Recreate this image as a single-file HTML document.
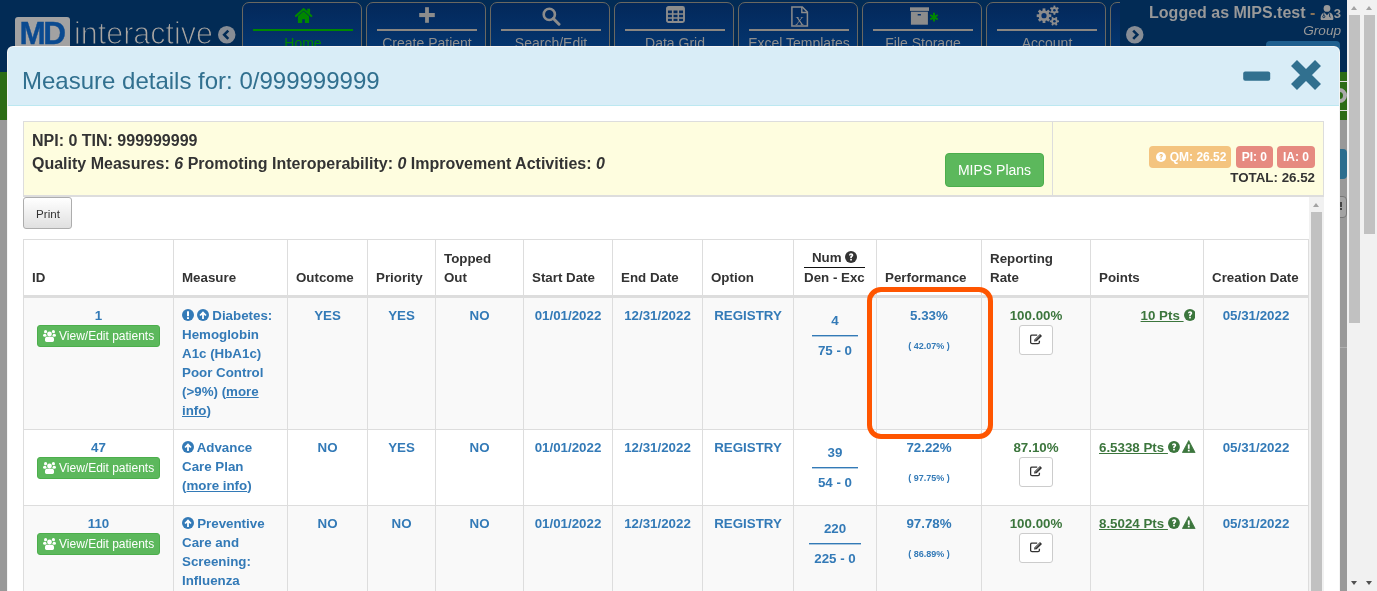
<!DOCTYPE html><html><head><meta charset="utf-8"><style>
*{box-sizing:border-box;margin:0;padding:0}
html,body{-webkit-font-smoothing:antialiased;width:1377px;height:591px;overflow:hidden;background:#999;font-family:"Liberation Sans",sans-serif;position:relative}
.abs{position:absolute}
svg{display:block}
#navy{left:0;top:0;width:1347px;height:72px;background:#022b55}
#green{left:0;top:72px;width:1347px;height:48px;background:#2c6c16}
#logo-box{left:15px;top:17px;width:55px;height:40px;background:#a2a2a2;border-radius:3px}
#logo-md{left:19.5px;top:18px;font-size:31.5px;line-height:30px;font-weight:bold;color:#0a4a90;letter-spacing:-2.4px;-webkit-text-stroke:0.4px #0a4a90}
#logo-int{left:74px;top:18px;font-size:30.5px;line-height:30px;color:#aaa6a2;-webkit-text-stroke:1.1px #022b55;paint-order:normal}
.tab{top:2px;width:120px;height:60px;border:1px solid #6a6861;border-radius:7px 7px 0 0;background:linear-gradient(#03285a 0%,#04346d 70%,#053c7b 100%)}
.tab .ln{position:absolute;left:10px;top:26px;width:100px;height:2px;background:#8a8681}
.tab .lb{position:absolute;left:1px;width:118px;top:32px;text-align:center;font-size:14px;line-height:16px;color:#8e8e8e}
.tab svg{position:absolute}
#logged{left:1120px;top:0;width:227px;height:72px;background:#022b55}
#lg1{right:6px;top:4px;font-size:16px;font-weight:bold;color:#999;line-height:18px;white-space:nowrap}
#lg2{right:6px;top:23px;font-size:13.6px;font-style:italic;color:#999;line-height:15px}
#bluebtn{left:1266px;top:41px;width:74px;height:20px;background:#1f5f8e;border-radius:4px}
#sb{left:1347px;top:0;width:30px;height:591px;background:#f1f1f1}
.thumb{position:absolute;background:#c1c1c1;width:11px}
.tri-up{position:absolute;width:0;height:0;border-left:3.5px solid transparent;border-right:3.5px solid transparent;border-bottom:4px solid #a3a3a3}
.tri-dn{position:absolute;width:0;height:0;border-left:3.6px solid transparent;border-right:3.6px solid transparent;border-top:4.2px solid #505050}
/* right strip stuff */
#rs-green{left:1339px;top:72px;width:8px;height:48px;background:#2c6c16}
/* modal */
#modal{left:7px;top:46px;width:1333px;height:560px;background:#fff;border:1px solid rgba(0,0,0,.04);border-radius:6px}
#modal-in{position:absolute;left:0;top:0;width:1331px;height:558px;overflow:hidden;border-radius:5px 5px 0 0}
#mh{position:absolute;left:0;top:0;width:1331px;height:59px;background:#d9edf7;border-bottom:1px solid #bce8f1}
#mt{position:absolute;left:14px;top:19px;font-size:24px;color:#31708f;line-height:30px;white-space:nowrap}
#mb{position:absolute;left:15px;top:74px;width:1301px}
#info{position:absolute;left:0;top:0;width:1301px;height:76px;background:#fefddf;border:1px solid #ddd;border-bottom:2px solid #ddd}
#info .l{position:absolute;left:8px;top:7px;font-size:16px;font-weight:bold;color:#333;line-height:23px;white-space:nowrap}
#info .div{position:absolute;left:1028px;top:0;width:1px;height:73px;background:#ddd}
#mips{position:absolute;left:921px;top:31px;width:99px;height:34px;background:#5cb85c;border:1px solid #4cae4c;border-radius:4px;color:#fff;font-size:14px;line-height:32px;text-align:center}
.lbl{display:inline-block;height:21.5px;line-height:23.5px;padding:0 6px;overflow:hidden;border-radius:4px;color:#fff;font-size:12px;font-weight:bold;vertical-align:top}
#lbls{position:absolute;right:8px;top:24px;text-align:right;font-size:0;white-space:nowrap}
#total{position:absolute;right:8px;top:48px;font-size:13.33px;font-weight:bold;color:#333;white-space:nowrap}
#print{position:absolute;left:0;top:76px;width:49px;height:32px;border:1px solid #adadad;border-radius:3px;background:linear-gradient(#fff,#e0e0e0);font-size:11.6px;color:#333;text-align:center;line-height:32px;padding-left:1px}
#tw{position:absolute;left:0;top:76px;width:1301px;height:420px;overflow:hidden}
#tsb{position:absolute;left:1286px;top:0;width:15px;height:420px;background:#f1f1f1}
#tsb .up{position:absolute;left:4px;top:6px;width:0;height:0;border-left:3.5px solid transparent;border-right:3.5px solid transparent;border-bottom:4px solid #a3a3a3}
#tsb .th{position:absolute;left:2px;top:15px;width:11px;height:400px;background:#c1c1c1}
table{position:absolute;left:0;top:42px;border-collapse:separate;border-spacing:0;table-layout:fixed;width:1286px;font-size:13.33px;line-height:19px;color:#333}
th,td{border-right:1px solid #ddd;border-bottom:1px solid #ddd;padding:8px;font-weight:bold;overflow:visible;white-space:nowrap}
th:first-child,td:first-child{border-left:1px solid #ddd}
thead th{border-top:1px solid #ddd;border-bottom:3px solid #ddd;vertical-align:bottom;text-align:left;height:59px}
td{vertical-align:top;text-align:center;color:#337ab7}
tr.odd td{background:#f9f9f9}
tr.r1 td{height:132px}
tr.r2 td{height:76px}
tr.r3 td{height:140px}
td.ms{text-align:left}
.nd{display:inline-block}
.nd .n{padding:5px 5.5px 5px;border-bottom:1px solid #337ab7;box-shadow:0 1px 0 rgba(51,122,183,0.4)}
.nd .d{padding:5px 5.5px 0}
.pc small{display:block;font-size:9px;margin-top:12px;line-height:19px}
.gr{color:#3c763d}
.eb{display:block;position:relative;margin:0 auto;width:34px;height:30px;background:#fff;border:1px solid #ccc;border-radius:3px}
.eb svg{position:absolute;left:10px;top:8px}
td.pt{text-align:right;color:#3c763d}
td.pt u{text-decoration:underline}
.vb{display:inline-block;position:relative;width:123px;height:22px;background:#5cb85c;border:1px solid #4cae4c;border-radius:3px;color:#fff;font-size:12px;font-weight:normal;line-height:21px;text-align:left;padding-left:21px;vertical-align:top}
.vb svg{position:absolute;left:5px;top:4px}
.hn{display:inline-block;margin-left:2px}
.hn .n{border-bottom:1px solid #111;text-align:center}
.ic{display:inline-block;vertical-align:-1px}
#orange{left:867px;top:287px;width:125.5px;height:152px;border:5.3px solid #ff5500;border-radius:14px}
</style></head><body><div style="position:absolute;left:0;top:0;width:1377px;height:591px;overflow:hidden;will-change:transform"><div id="navy" class="abs"></div><div id="green" class="abs"></div>
<div id="logo-box" class="abs"></div><div id="logo-md" class="abs">MD</div><div id="logo-int" class="abs">interactive</div>
<svg class="abs" style="left:218px;top:26px" width="17.5" height="17.5" viewBox="0 0 17.5 17.5"><circle cx="8.75" cy="8.75" r="8.75" fill="#878d95"/><path d="M10.3 4.6 L6.2 8.7 L10.3 12.8" fill="none" stroke="#022b55" stroke-width="2.6"/></svg>
<div class="abs tab" style="left:242px"><svg style="left:52px;top:5px" width="18" height="16" viewBox="0 0 18 16"><path d="M0.9 8 L8.6 1.2 L16.3 8" fill="none" stroke="#008800" stroke-width="2.2" stroke-linecap="round"/><rect x="12.2" y="0.7" width="2.9" height="4.5" fill="#008800"/><path d="M2.9 8.3 L8.6 3.3 L14.1 8.3 V15 H9.9 V11.2 H7.2 V15 H2.9 Z" fill="#008800"/></svg><div class="ln" style="background:#008800"></div><div class="lb" style="color:#008800">Home</div></div>
<div class="abs tab" style="left:366px"><svg style="left:52px;top:4px" width="16" height="16" viewBox="0 0 16 16"><rect x="6.1" y="0.2" width="3.8" height="15.6" fill="#8c8c8c"/><rect x="0.2" y="6" width="15.6" height="4.1" fill="#8c8c8c"/></svg><div class="ln"></div><div class="lb">Create Patient</div></div>
<div class="abs tab" style="left:490px"><svg style="left:51px;top:4px" width="19" height="19" viewBox="0 0 19 19"><circle cx="7.3" cy="7.4" r="5.6" fill="none" stroke="#8c8c8c" stroke-width="2.6"/><path d="M11.3 11.5 L17 17.2" stroke="#8c8c8c" stroke-width="3" stroke-linecap="round"/></svg><div class="ln"></div><div class="lb">Search/Edit</div></div>
<div class="abs tab" style="left:614px"><svg style="left:51px;top:3px" width="19" height="17" viewBox="0 0 19 17"><rect x="1" y="1" width="17" height="15" rx="1.5" fill="none" stroke="#8c8c8c" stroke-width="1.9"/><rect x="1" y="1" width="17" height="3.5" fill="#8c8c8c"/><path d="M1 8 H18 M1 12 H18 M6.7 4 V16 M12.3 4 V16" stroke="#8c8c8c" stroke-width="1.6"/></svg><div class="ln"></div><div class="lb">Data Grid</div></div>
<div class="abs tab" style="left:738px"><svg style="left:52px;top:3px" width="18" height="22" viewBox="0 0 18 22"><path d="M0.9 0.9 H11.3 L16.4 6 V19.9 H0.9 Z" fill="none" stroke="#8c8c8c" stroke-width="1.5"/><path d="M10.8 0.9 V6.5 H16.4" fill="none" stroke="#8c8c8c" stroke-width="1.4"/><text x="8.6" y="19" font-family="Liberation Serif" font-size="12.5" fill="#8c8c8c" text-anchor="middle">X</text></svg><div class="ln"></div><div class="lb">Excel Templates</div></div>
<div class="abs tab" style="left:862px"><svg style="left:47px;top:4px" width="30" height="20" viewBox="0 0 30 20"><rect x="0" y="0.3" width="19" height="3.6" fill="#8c8c8c"/><rect x="0.9" y="4.7" width="17" height="13" fill="#8c8c8c"/><rect x="7.6" y="7" width="3.4" height="1.6" rx="0.6" fill="#04306a"/><g stroke="#008800" stroke-width="2" stroke-linecap="butt"><path d="M24 5.8 V14.6"/><path d="M20.3 8 L27.7 12.4"/><path d="M20.3 12.4 L27.7 8"/></g></svg><div class="ln"></div><div class="lb">File Storage</div></div>
<div class="abs tab" style="left:986px"><svg style="left:49px;top:1px" width="24" height="22" viewBox="0 0 24 22"><g fill="#8c8c8c">
<circle cx="8" cy="11.7" r="5.4"/>
<rect x="6.6" y="4.4" width="2.8" height="3" transform="rotate(0 8 11.7)"/><rect x="6.6" y="4.4" width="2.8" height="3" transform="rotate(45 8 11.7)"/><rect x="6.6" y="4.4" width="2.8" height="3" transform="rotate(90 8 11.7)"/><rect x="6.6" y="4.4" width="2.8" height="3" transform="rotate(135 8 11.7)"/><rect x="6.6" y="4.4" width="2.8" height="3" transform="rotate(180 8 11.7)"/><rect x="6.6" y="4.4" width="2.8" height="3" transform="rotate(225 8 11.7)"/><rect x="6.6" y="4.4" width="2.8" height="3" transform="rotate(270 8 11.7)"/><rect x="6.6" y="4.4" width="2.8" height="3" transform="rotate(315 8 11.7)"/>
<circle cx="18.4" cy="6.2" r="3.2"/>
<rect x="17.5" y="1.6" width="1.8" height="2" transform="rotate(0 18.4 6.2)"/><rect x="17.5" y="1.6" width="1.8" height="2" transform="rotate(60 18.4 6.2)"/><rect x="17.5" y="1.6" width="1.8" height="2" transform="rotate(120 18.4 6.2)"/><rect x="17.5" y="1.6" width="1.8" height="2" transform="rotate(180 18.4 6.2)"/><rect x="17.5" y="1.6" width="1.8" height="2" transform="rotate(240 18.4 6.2)"/><rect x="17.5" y="1.6" width="1.8" height="2" transform="rotate(300 18.4 6.2)"/>
<circle cx="18.4" cy="17.3" r="3.2"/>
<rect x="17.5" y="12.7" width="1.8" height="2" transform="rotate(30 18.4 17.3)"/><rect x="17.5" y="12.7" width="1.8" height="2" transform="rotate(90 18.4 17.3)"/><rect x="17.5" y="12.7" width="1.8" height="2" transform="rotate(150 18.4 17.3)"/><rect x="17.5" y="12.7" width="1.8" height="2" transform="rotate(210 18.4 17.3)"/><rect x="17.5" y="12.7" width="1.8" height="2" transform="rotate(270 18.4 17.3)"/><rect x="17.5" y="12.7" width="1.8" height="2" transform="rotate(330 18.4 17.3)"/>
</g><circle cx="8" cy="11.7" r="2.6" fill="#04306a"/><circle cx="18.4" cy="6.2" r="1.3" fill="#04306a"/><circle cx="18.4" cy="17.3" r="1.3" fill="#04306a"/></svg><div class="ln"></div><div class="lb">Account</div></div>
<div class="abs tab" style="left:1110px"><div class="ln"></div></div>
<div id="logged" class="abs"></div>
<svg class="abs" style="left:1126px;top:26px" width="17.5" height="17.5" viewBox="0 0 17.5 17.5"><circle cx="8.75" cy="8.75" r="8.75" fill="#878d95"/><path d="M7.2 4.6 L11.3 8.7 L7.2 12.8" fill="none" stroke="#022b55" stroke-width="2.6"/></svg>
<div id="lg1" class="abs" style="right:36px">Logged as MIPS.test <span style="color:#8a7358">-</span> <svg class="ic" style="vertical-align:-1.5px" width="14" height="15" viewBox="0 0 14 15"><circle cx="7" cy="3.4" r="3.4" fill="#999"/><path d="M0.6 13.4 C0.6 9.8 2.4 7.9 4.5 7.6 L7 10.3 L9.5 7.6 C11.6 7.9 13.4 9.8 13.4 13.4 C13.4 14.4 12.8 15 12 15 H2 C1.2 15 0.6 14.4 0.6 13.4 Z" fill="#999"/><circle cx="3.8" cy="11.6" r="1.1" fill="none" stroke="#022b55" stroke-width="0.9"/><path d="M3.8 10.5 V8.2 M9.6 8.4 V11 Q9.6 12.3 10.6 12.3" fill="none" stroke="#022b55" stroke-width="0.9"/></svg><span style="font-size:13px">3</span></div>
<div id="lg2" class="abs" style="right:36px">Group</div>
<div id="bluebtn" class="abs"></div>
<div id="rs-green" class="abs"></div>
<div class="abs" style="left:1339px;top:81px;width:8px;height:1px;background:#dcdcdc"></div>
<div class="abs" style="left:1339px;top:110px;width:8px;height:1px;background:#dcdcdc"></div>
<div class="abs" style="left:1332px;top:88px;width:15px;height:15px;border-radius:50%;border:4.5px solid #aaa"></div>
<div class="abs" style="left:1320px;top:149px;width:27px;height:30px;border-radius:4px;background:#2b6d8e"></div>
<div class="abs" style="left:1320px;top:196px;width:27px;height:22px;border-radius:4px;background:#a3a3a3;border:1px solid #777"></div>
<div class="abs" style="left:1340px;top:202px;width:2px;height:5px;background:#444"></div><div class="abs" style="left:1340px;top:208px;width:2px;height:1.5px;background:#444"></div>
<div class="abs" style="left:1338px;top:347px;width:9px;height:1px;background:#b0b0b0"></div>
<div id="sb" class="abs"><div class="tri-up" style="left:4px;top:6px"></div><div class="tri-up" style="left:19px;top:6px"></div><div class="thumb" style="left:2px;top:15px;height:308px"></div><div class="thumb" style="left:17px;top:15px;height:219px"></div><div class="tri-dn" style="left:4px;top:581px"></div><div class="tri-dn" style="left:19px;top:581px"></div></div>
<div id="modal" class="abs"><div id="modal-in">
<div id="mh"><div id="mt">Measure details for: 0/999999999</div><svg class="abs" style="left:1235px;top:24px" width="28" height="10" viewBox="0 0 28 10"><rect x="0.2" y="0.5" width="27" height="9.2" rx="2" fill="#31708f"/></svg><svg class="abs" style="left:1282px;top:12px" width="32" height="32" viewBox="0 0 32 32"><path d="M4 4 L28 28 M28 4 L4 28" stroke="#31708f" stroke-width="8.4"/></svg></div>
<div id="mb">
<div id="info"><div class="l">NPI: 0 TIN: 999999999<br>Quality Measures: <i>6</i> Promoting Interoperability: <i>0</i> Improvement Activities: <i>0</i></div><div id="mips">MIPS Plans</div><div class="div"></div><div id="lbls"><span class="lbl" style="background:#f4c47f;padding-left:3px;padding-right:5px"><span style="display:inline-block;width:4px"></span><svg class="ic" style="margin-right:0.00px" width="10" height="10" viewBox="0 0 12 12"><circle cx="6" cy="6" r="6" fill="#fff"/><path d="M4 4.4 C4 3 5 2.3 6.1 2.3 C7.4 2.3 8.3 3.1 8.3 4.2 C8.3 5.4 7.1 5.7 6.9 6.4 V7 H5.2 V6.2 C5.2 5.1 6.5 4.8 6.5 4.2 C6.5 3.9 6.3 3.7 6 3.7 C5.6 3.7 5.5 4 5.5 4.4 Z" fill="#f4c47f"/><rect x="5.2" y="7.8" width="1.7" height="1.7" fill="#f4c47f"/></svg>&nbsp;QM: 26.52</span><span class="lbl" style="background:#e68a80;margin-left:4.2px">PI: 0</span><span class="lbl" style="background:#e68a80;margin-left:4px">IA: 0</span></div><div id="total">TOTAL: 26.52</div></div>
<div id="print">Print</div>
<div id="tw"><table><colgroup><col style="width:151px"><col style="width:114px"><col style="width:80px"><col style="width:68px"><col style="width:88px"><col style="width:89px"><col style="width:90px"><col style="width:91px"><col style="width:83px"><col style="width:105px"><col style="width:109px"><col style="width:113px"><col style="width:105px"></colgroup>
<thead><tr><th>ID</th><th>Measure</th><th>Outcome</th><th>Priority</th><th>Topped<br>Out</th><th>Start Date</th><th>End Date</th><th>Option</th><th><div class="hn"><div class="n">Num <svg class="ic" style="margin-right:-0.57px" width="12" height="12" viewBox="0 0 12 12"><circle cx="6" cy="6" r="6" fill="#333"/><path d="M4 4.4 C4 3 5 2.3 6.1 2.3 C7.4 2.3 8.3 3.1 8.3 4.2 C8.3 5.4 7.1 5.7 6.9 6.4 V7 H5.2 V6.2 C5.2 5.1 6.5 4.8 6.5 4.2 C6.5 3.9 6.3 3.7 6 3.7 C5.6 3.7 5.5 4 5.5 4.4 Z" fill="#fff"/><rect x="5.2" y="7.8" width="1.7" height="1.7" fill="#fff"/></svg></div><div class="d">Den - Exc</div></div></th><th>Performance</th><th>Reporting<br>Rate</th><th>Points</th><th>Creation Date</th></tr></thead><tbody>
<tr class="r1 odd"><td>1<br><span class="vb"><svg width="13" height="12" viewBox="0 0 13 12"><circle cx="2.6" cy="1.7" r="1.6" fill="#fff"/><circle cx="10.4" cy="1.7" r="1.6" fill="#fff"/><ellipse cx="1.8" cy="5.3" rx="1.8" ry="1.5" fill="#fff"/><ellipse cx="11.2" cy="5.3" rx="1.8" ry="1.5" fill="#fff"/><circle cx="6.5" cy="4" r="3" fill="#5cb85c"/><circle cx="6.5" cy="4" r="2.4" fill="#fff"/><path d="M2 8.8 C2 7.3 3.2 6.7 4.3 6.7 H8.7 C9.8 6.7 11 7.3 11 8.8 V10.6 C11 11.5 10.3 12 9.5 12 H3.5 C2.7 12 2 11.5 2 10.6 Z" fill="#fff"/></svg>View/Edit patients</span></td><td class="ms"><svg class="ic" style="margin-right:-0.57px" width="12" height="12" viewBox="0 0 12 12"><circle cx="6" cy="6" r="6" fill="#337ab7"/><rect x="5" y="2.3" width="2" height="4.9" fill="#fff"/><rect x="5" y="8.2" width="2" height="1.8" fill="#fff"/></svg> <svg class="ic" style="margin-right:-0.57px" width="12" height="12" viewBox="0 0 12 12"><circle cx="6" cy="6" r="6" fill="#337ab7"/><path d="M6 2.2 L9.6 5.9 L8.3 7.1 L6.9 5.7 V10 H5.1 V5.7 L3.7 7.1 L2.4 5.9 Z" fill="#fff"/></svg> Diabetes:<br>Hemoglobin<br>A1c (HbA1c)<br>Poor Control<br>(&gt;9%) (<u>more</u><br><u>info</u>)</td><td>YES</td><td>YES</td><td>NO</td><td>01/01/2022</td><td>12/31/2022</td><td>REGISTRY</td><td><div class="nd"><div class="n">4</div><div class="d">75 - 0</div></div></td><td class="pc">5.33%<small>( 42.07% )</small></td><td class="gr">100.00%<span class="eb"><svg width="13" height="11" viewBox="0 0 13 11"><path d="M7.2 1.1 H2 Q0.6 1.1 0.6 2.5 V8.2 Q0.6 9.6 2 9.6 H8 Q9.4 9.6 9.4 8.2 V6.8" fill="none" stroke="#333" stroke-width="1.3"/><path d="M4 7.6 L4.7 5.3 L10 0 L12 2 L6.7 7.3 Z" fill="#333"/><path d="M5.2 6.1 L9.8 1.5" stroke="#fff" stroke-width="0.5"/></svg></span></td><td class="pt"><u>10 Pts </u><svg class="ic" style="margin-right:-0.47px" width="11.9" height="11.9" viewBox="0 0 12 12"><circle cx="6" cy="6" r="6" fill="#3c763d"/><path d="M4 4.4 C4 3 5 2.3 6.1 2.3 C7.4 2.3 8.3 3.1 8.3 4.2 C8.3 5.4 7.1 5.7 6.9 6.4 V7 H5.2 V6.2 C5.2 5.1 6.5 4.8 6.5 4.2 C6.5 3.9 6.3 3.7 6 3.7 C5.6 3.7 5.5 4 5.5 4.4 Z" fill="#fff"/><rect x="5.2" y="7.8" width="1.7" height="1.7" fill="#fff"/></svg></td><td>05/31/2022</td></tr>
<tr class="r2"><td>47<br><span class="vb"><svg width="13" height="12" viewBox="0 0 13 12"><circle cx="2.6" cy="1.7" r="1.6" fill="#fff"/><circle cx="10.4" cy="1.7" r="1.6" fill="#fff"/><ellipse cx="1.8" cy="5.3" rx="1.8" ry="1.5" fill="#fff"/><ellipse cx="11.2" cy="5.3" rx="1.8" ry="1.5" fill="#fff"/><circle cx="6.5" cy="4" r="3" fill="#5cb85c"/><circle cx="6.5" cy="4" r="2.4" fill="#fff"/><path d="M2 8.8 C2 7.3 3.2 6.7 4.3 6.7 H8.7 C9.8 6.7 11 7.3 11 8.8 V10.6 C11 11.5 10.3 12 9.5 12 H3.5 C2.7 12 2 11.5 2 10.6 Z" fill="#fff"/></svg>View/Edit patients</span></td><td class="ms"><svg class="ic" style="margin-right:-0.57px" width="12" height="12" viewBox="0 0 12 12"><circle cx="6" cy="6" r="6" fill="#337ab7"/><path d="M6 2.2 L9.6 5.9 L8.3 7.1 L6.9 5.7 V10 H5.1 V5.7 L3.7 7.1 L2.4 5.9 Z" fill="#fff"/></svg> Advance<br>Care Plan<br>(<u>more info</u>)</td><td>NO</td><td>YES</td><td>NO</td><td>01/01/2022</td><td>12/31/2022</td><td>REGISTRY</td><td><div class="nd"><div class="n">39</div><div class="d">54 - 0</div></div></td><td class="pc">72.22%<small>( 97.75% )</small></td><td class="gr">87.10%<span class="eb"><svg width="13" height="11" viewBox="0 0 13 11"><path d="M7.2 1.1 H2 Q0.6 1.1 0.6 2.5 V8.2 Q0.6 9.6 2 9.6 H8 Q9.4 9.6 9.4 8.2 V6.8" fill="none" stroke="#333" stroke-width="1.3"/><path d="M4 7.6 L4.7 5.3 L10 0 L12 2 L6.7 7.3 Z" fill="#333"/><path d="M5.2 6.1 L9.8 1.5" stroke="#fff" stroke-width="0.5"/></svg></span></td><td class="pt"><u>6.5338 Pts </u><svg class="ic" style="margin-right:-0.47px" width="11.9" height="11.9" viewBox="0 0 12 12"><circle cx="6" cy="6" r="6" fill="#3c763d"/><path d="M4 4.4 C4 3 5 2.3 6.1 2.3 C7.4 2.3 8.3 3.1 8.3 4.2 C8.3 5.4 7.1 5.7 6.9 6.4 V7 H5.2 V6.2 C5.2 5.1 6.5 4.8 6.5 4.2 C6.5 3.9 6.3 3.7 6 3.7 C5.6 3.7 5.5 4 5.5 4.4 Z" fill="#fff"/><rect x="5.2" y="7.8" width="1.7" height="1.7" fill="#fff"/></svg> <svg class="ic" style="margin-left:-1px;margin-right:1px" width="13.5" height="13" viewBox="0 0 13.5 13"><path d="M6.75 0.5 L13.1 12.5 H0.4 Z" fill="#3c763d" stroke="#3c763d" stroke-width="0.8" stroke-linejoin="round"/><rect x="5.85" y="4.4" width="1.8" height="4.4" fill="#fff"/><rect x="5.85" y="9.7" width="1.8" height="1.7" fill="#fff"/></svg></td><td>05/31/2022</td></tr>
<tr class="r3 odd"><td>110<br><span class="vb"><svg width="13" height="12" viewBox="0 0 13 12"><circle cx="2.6" cy="1.7" r="1.6" fill="#fff"/><circle cx="10.4" cy="1.7" r="1.6" fill="#fff"/><ellipse cx="1.8" cy="5.3" rx="1.8" ry="1.5" fill="#fff"/><ellipse cx="11.2" cy="5.3" rx="1.8" ry="1.5" fill="#fff"/><circle cx="6.5" cy="4" r="3" fill="#5cb85c"/><circle cx="6.5" cy="4" r="2.4" fill="#fff"/><path d="M2 8.8 C2 7.3 3.2 6.7 4.3 6.7 H8.7 C9.8 6.7 11 7.3 11 8.8 V10.6 C11 11.5 10.3 12 9.5 12 H3.5 C2.7 12 2 11.5 2 10.6 Z" fill="#fff"/></svg>View/Edit patients</span></td><td class="ms"><svg class="ic" style="margin-right:-0.57px" width="12" height="12" viewBox="0 0 12 12"><circle cx="6" cy="6" r="6" fill="#337ab7"/><path d="M6 2.2 L9.6 5.9 L8.3 7.1 L6.9 5.7 V10 H5.1 V5.7 L3.7 7.1 L2.4 5.9 Z" fill="#fff"/></svg> Preventive<br>Care and<br>Screening:<br>Influenza<br>Immunization</td><td>NO</td><td>NO</td><td>NO</td><td>01/01/2022</td><td>12/31/2022</td><td>REGISTRY</td><td><div class="nd"><div class="n">220</div><div class="d">225 - 0</div></div></td><td class="pc">97.78%<small>( 86.89% )</small></td><td class="gr">100.00%<span class="eb"><svg width="13" height="11" viewBox="0 0 13 11"><path d="M7.2 1.1 H2 Q0.6 1.1 0.6 2.5 V8.2 Q0.6 9.6 2 9.6 H8 Q9.4 9.6 9.4 8.2 V6.8" fill="none" stroke="#333" stroke-width="1.3"/><path d="M4 7.6 L4.7 5.3 L10 0 L12 2 L6.7 7.3 Z" fill="#333"/><path d="M5.2 6.1 L9.8 1.5" stroke="#fff" stroke-width="0.5"/></svg></span></td><td class="pt"><u>8.5024 Pts </u><svg class="ic" style="margin-right:-0.47px" width="11.9" height="11.9" viewBox="0 0 12 12"><circle cx="6" cy="6" r="6" fill="#3c763d"/><path d="M4 4.4 C4 3 5 2.3 6.1 2.3 C7.4 2.3 8.3 3.1 8.3 4.2 C8.3 5.4 7.1 5.7 6.9 6.4 V7 H5.2 V6.2 C5.2 5.1 6.5 4.8 6.5 4.2 C6.5 3.9 6.3 3.7 6 3.7 C5.6 3.7 5.5 4 5.5 4.4 Z" fill="#fff"/><rect x="5.2" y="7.8" width="1.7" height="1.7" fill="#fff"/></svg> <svg class="ic" style="margin-left:-1px;margin-right:1px" width="13.5" height="13" viewBox="0 0 13.5 13"><path d="M6.75 0.5 L13.1 12.5 H0.4 Z" fill="#3c763d" stroke="#3c763d" stroke-width="0.8" stroke-linejoin="round"/><rect x="5.85" y="4.4" width="1.8" height="4.4" fill="#fff"/><rect x="5.85" y="9.7" width="1.8" height="1.7" fill="#fff"/></svg></td><td>05/31/2022</td></tr>
</tbody></table><div id="tsb"><div class="up"></div><div class="th"></div></div></div>
</div></div></div>
<div id="orange" class="abs"></div></div></body></html>
